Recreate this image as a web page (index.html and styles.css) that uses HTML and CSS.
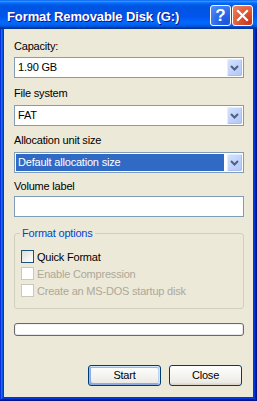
FILE: index.html
```html
<!DOCTYPE html>
<html>
<head>
<meta charset="utf-8">
<link rel="stylesheet" href="styles.css">
</head>
<body>
<div class="window">
  <div class="titlebar">
    <div class="title">Format Removable Disk (G:)</div>
    <div class="tbtns">
      <div class="tbtn help">?</div>
      <div class="tbtn close">
        <svg width="21" height="21" viewBox="0 0 21 21"><path d="M6 6 L15 15 M15 6 L6 15" stroke="#fff" stroke-width="2.2" stroke-linecap="square"/></svg>
      </div>
    </div>
  </div>
  <div class="body">
    <div class="label l1">Capacity:</div>
    <div class="combo">
      <span class="value">1.90 GB</span>
      <span class="dd"><svg width="15" height="17" viewBox="0 0 15 17"><path d="M4 7 L7.5 10.5 L11 7" fill="none" stroke="#4D6185" stroke-width="2"/></svg></span>
    </div>
    <div class="label l2">File system</div>
    <div class="combo">
      <span class="value">FAT</span>
      <span class="dd"><svg width="15" height="17" viewBox="0 0 15 17"><path d="M4 7 L7.5 10.5 L11 7" fill="none" stroke="#4D6185" stroke-width="2"/></svg></span>
    </div>
    <div class="label l3">Allocation unit size</div>
    <div class="combo">
      <span class="value sel">Default allocation size</span>
      <span class="dd"><svg width="15" height="17" viewBox="0 0 15 17"><path d="M4 7 L7.5 10.5 L11 7" fill="none" stroke="#4D6185" stroke-width="2"/></svg></span>
    </div>
    <div class="label l4">Volume label</div>
    <div class="input"></div>
    <fieldset class="group">
      <legend>Format options</legend>
      <div class="row"><span class="cb"></span><span>Quick Format</span></div>
      <div class="row dis"><span class="cb"></span><span>Enable Compression</span></div>
      <div class="row dis"><span class="cb"></span><span>Create an MS-DOS startup disk</span></div>
    </fieldset>
    <div class="progress"></div>
    <div class="buttons">
      <div class="btn default">Start</div>
      <div class="btn">Close</div>
    </div>
  </div>
</div>
</body>
</html>
```
FILE: styles.css
```css
html, body {
  margin: 0;
  padding: 0;
  background: #ECE9D8;
}
.window {
  width: 257px;
  height: 401px;
  display: flex;
  flex-direction: column;
  background: #0831D9;
  box-shadow: inset -1px -1px #00138C, inset 1px 1px #0831D9, inset -2px -2px #001EA0, inset 2px 2px #166AEE, inset -3px -3px #003BDA, inset 3px 3px #0855DD;
  box-sizing: border-box;
  font-family: "Liberation Sans", Arial, sans-serif;
  font-size: 11px;
  letter-spacing: -0.2px;
  color: #000;
}
.titlebar {
  height: 29px;
  display: flex;
  align-items: flex-start;
  justify-content: space-between;
  background: linear-gradient(180deg, #0058EE 0%, #3593FF 4%, #288EFF 6%, #127DFF 8%, #036FFC 10%, #0262EE 14%, #0057E5 20%, #0054E3 24%, #0055EB 56%, #005BF5 66%, #026AFE 76%, #0062EF 86%, #0052D6 92%, #0040AB 94%, #003092 100%);
  padding: 0 4px 0 7px;
}
.title {
  font-weight: bold;
  font-size: 13px;
  letter-spacing: -0.1px;
  color: #fff;
  line-height: 15px;
  margin-top: 9px;
  text-shadow: 1px 1px #0F1089;
}
.tbtns {
  display: flex;
  gap: 1px;
  margin-top: 5px;
}
.tbtn {
  width: 21px;
  height: 21px;
  box-sizing: border-box;
  border: 1px solid #fff;
  border-radius: 3px;
  display: flex;
  align-items: center;
  justify-content: center;
}
.help {
  background: radial-gradient(circle at 80% 85%, #1F54D9 0%, #2A6BEC 45%, #5A92F6 100%);
  color: #fff;
  font-weight: bold;
  font-size: 17px;
  letter-spacing: 0;
  line-height: 19px;
}
.close {
  background: radial-gradient(circle at 85% 85%, #C7371A 0%, #DD5532 45%, #EE8767 100%);
}
.close svg {
  margin: -1px;
}
.body {
  flex: 1;
  margin: 0 4px 4px 4px;
  background: #ECE9D8;
  padding: 11px 9px 0 10px;
  display: flex;
  flex-direction: column;
}
.label {
  line-height: 13px;
  height: 13px;
}
.l1 { margin-bottom: 4px; }
.l2 { margin-top: 9px; margin-bottom: 5px; }
.l3 { margin-top: 8px; margin-bottom: 5px; }
.l4 { margin-top: 7px; margin-bottom: 3px; }
.combo {
  height: 21px;
  box-sizing: border-box;
  border: 1px solid #7F9DB9;
  background: #fff;
  display: flex;
  align-items: stretch;
}
.value {
  flex: 1;
  margin: 1px 2px 1px 1px;
  padding-left: 2px;
  line-height: 17px;
}
.value.sel {
  background: #316AC5;
  color: #fff;
}
.dd {
  width: 15px;
  height: 17px;
  margin: 1px;
  box-sizing: border-box;
  border-radius: 2px;
  background: linear-gradient(135deg, #D7E3FD 0%, #C2D4FB 50%, #B1C6F7 100%);
  box-shadow: inset 1px 1px #E6EEFE, inset -1px -1px #A8BFF2;
  display: flex;
}
.input {
  height: 21px;
  box-sizing: border-box;
  border: 1px solid #7F9DB9;
  background: #fff;
}
.group {
  margin: 10px 0 0 0;
  padding: 8px 0 9px 6px;
  border: 1px solid #D0D0BF;
  border-radius: 3px;
  min-width: 0;
}
.group legend {
  margin-left: -1px;
  padding: 0 2px;
  color: #0046D5;
  line-height: 13px;
}
.row {
  height: 17px;
  display: flex;
  align-items: center;
}
.cb {
  width: 13px;
  height: 13px;
  box-sizing: border-box;
  border: 1px solid #1C5180;
  background: linear-gradient(135deg, #DCDCD7 0%, #F6F6F4 70%, #FFFFFF 100%);
  margin-right: 3px;
}
.row.dis {
  color: #ACA899;
}
.row.dis .cb {
  border-color: #CAC8BB;
  background: #fff;
}
.progress {
  margin-top: 14px;
  height: 13px;
  box-sizing: border-box;
  border: 1px solid #686868;
  border-radius: 3px;
  background: #fff;
  box-shadow: inset 1px 1px #F4F4F4, inset -1px -1px #E8E8E8;
}
.buttons {
  margin-top: 29px;
  display: flex;
  gap: 8px;
  padding-left: 74px;
}
.btn {
  width: 73px;
  height: 21px;
  box-sizing: border-box;
  border: 1px solid #003C74;
  border-radius: 3px;
  background: linear-gradient(180deg, #FFFFFF 0%, #ECEBE5 86%, #D8D0C4 100%);
  display: flex;
  align-items: center;
  justify-content: center;
  line-height: 13px;
}
.btn.default {
  box-shadow: inset -1px 1px #CEE7FF, inset 1px 2px #98B8EA, inset -2px 2px #BCD4F6, inset 1px -1px #89ADE4, inset 2px -2px #89ADE4;
}
```
